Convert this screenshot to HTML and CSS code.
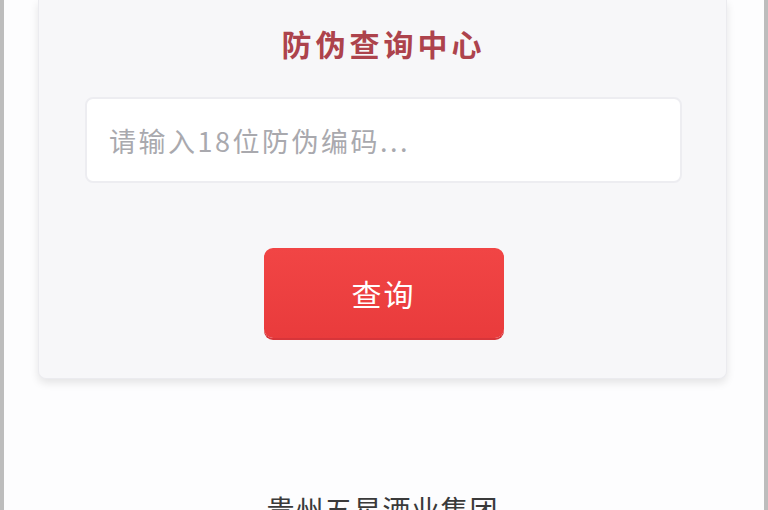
FILE: index.html
```html
<!DOCTYPE html>
<html lang="zh-CN">
<head>
<meta charset="utf-8">
<title>防伪查询中心</title>
<link rel="stylesheet" href="styles.css">
</head>
<body>
<div class="page">
  <div class="card">
    <h1 class="title">防伪查询中心</h1>
    <input class="code-input" type="text" placeholder="请输入18位防伪编码...">
    <button class="query-btn" type="button">查询</button>
  </div>
  <div class="footer">贵州五星酒业集团</div>
</div>
</body>
</html>
```

FILE: styles.css
```css
html, body {
  margin: 0;
  padding: 0;
  height: 100%;
}
body {
  font-family: "Noto Sans CJK SC", "Noto Sans", sans-serif;
  background: #fdfdfe;
  overflow: hidden;
}
.page {
  box-sizing: border-box;
  height: 510px;
  border-left: 4px solid #bdbdbd;
  border-right: 4px solid #bdbdbd;
  background: #fdfdfe;
  padding: 0 37px 0 34px;
  display: flex;
  flex-direction: column;
  align-items: stretch;
}
.card {
  background: #f7f7f9;
  border: 1px solid #ebebef;
  border-top: none;
  border-radius: 0 0 8px 8px;
  box-shadow: 0 4px 8px rgba(0, 0, 0, 0.10);
  padding: 25px 44px 40px 46px;
  display: flex;
  flex-direction: column;
  align-items: center;
}
.title {
  margin: 0;
  font-size: 30px;
  line-height: 36px;
  font-weight: 700;
  letter-spacing: 4px;
  color: #ad434c;
  text-align: center;
}
.code-input {
  box-sizing: border-box;
  margin-top: 36px;
  width: 100%;
  height: 86px;
  border: 2px solid #ededf1;
  border-radius: 8px;
  background: #ffffff;
  padding: 0 20px 0 22px;
  font-family: "Noto Sans CJK SC", "Noto Sans", sans-serif;
  font-size: 27px;
  letter-spacing: 2.5px;
  color: #333333;
  outline: none;
}
.code-input::placeholder {
  color: #a9a9ae;
}
.query-btn {
  margin-top: 65px;
  width: 240px;
  height: 90px;
  border: none;
  border-radius: 9px;
  background: linear-gradient(#f14545, #e93b3c);
  box-shadow: 0 2px 0 #d7353a;
  color: #ffffff;
  font-family: "Noto Sans CJK SC", "Noto Sans", sans-serif;
  font-size: 30px;
  letter-spacing: 2px;
}
.footer {
  margin-top: 113px;
  text-align: center;
  font-size: 28px;
  line-height: 34px;
  letter-spacing: 1px;
  color: #3a3a3a;
}
```
